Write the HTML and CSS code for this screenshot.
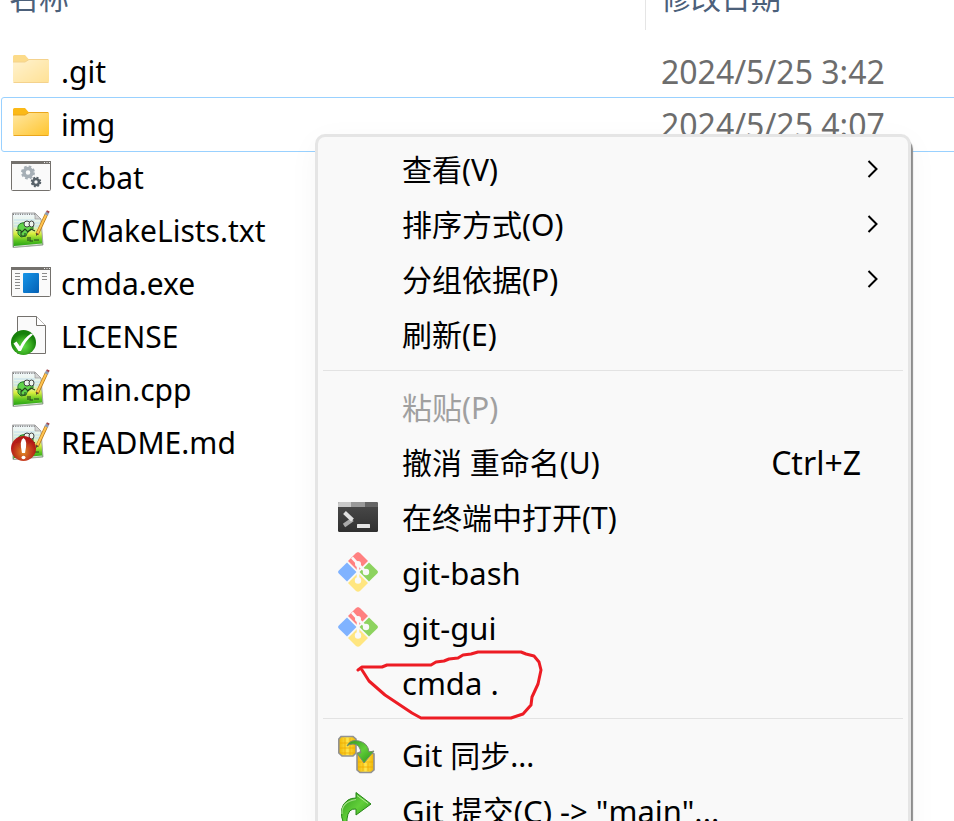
FILE: index.html
```html
<!DOCTYPE html>
<html lang="zh-CN">
<head>
<meta charset="utf-8">
<title>cmda</title>
<link rel="stylesheet" href="styles.css">
</head>
<body>
<svg class="defs" aria-hidden="true">
  <defs>
    <linearGradient id="folderFill" x1="0" y1="0" x2="1" y2="1"><stop offset="0" stop-color="#ffe7a2"/><stop offset="1" stop-color="#ffc52e"/></linearGradient>
    <linearGradient id="blueFill" x1="0" y1="0" x2="1" y2="1"><stop offset="0" stop-color="#1695e8"/><stop offset="1" stop-color="#0560b4"/></linearGradient>
    <linearGradient id="noteFill" x1="0" y1="0" x2="0" y2="1"><stop offset="0" stop-color="#f4f9ff"/><stop offset=".4" stop-color="#dff0d8"/><stop offset=".6" stop-color="#d9ee3c"/><stop offset=".8" stop-color="#5cc421"/><stop offset="1" stop-color="#189a12"/></linearGradient>
    <radialGradient id="okFill" cx=".5" cy=".65"><stop offset="0" stop-color="#62de48"/><stop offset=".6" stop-color="#38ac20"/><stop offset="1" stop-color="#16800a"/></radialGradient>
    <radialGradient id="badFill" cx=".5" cy=".65"><stop offset="0" stop-color="#e88a28"/><stop offset=".6" stop-color="#c9401c"/><stop offset="1" stop-color="#b51414"/></radialGradient>
    <linearGradient id="termFill" x1="0" y1="0" x2="0" y2="1"><stop offset="0" stop-color="#4b4b4b"/><stop offset="1" stop-color="#303030"/></linearGradient>
    <linearGradient id="goldFill" x1="0" y1="0" x2="1" y2="0"><stop offset="0" stop-color="#f0b400"/><stop offset=".5" stop-color="#ffe44a"/><stop offset="1" stop-color="#f0b400"/></linearGradient>
    <linearGradient id="greenFill" x1="0" y1="0" x2="1" y2="1"><stop offset="0" stop-color="#2f9a1c"/><stop offset=".5" stop-color="#62cf3a"/><stop offset="1" stop-color="#259012"/></linearGradient>

    <symbol id="folder" viewBox="0 0 40 40">
      <path d="M2 14V5.500Q2 4 3.500 4H14L17.500 8H36.500Q38 8 38 9.500V14Z" fill="#fbb917"/>
      <path d="M2 11H14L18 8.500H36.500Q38 8.500 38 10V30Q38 31.500 36.500 31.500H3.500Q2 31.500 2 30Z" fill="url(#folderFill)"/>
      <path d="M2 11H14L18 8.500H37M2.500 31.500H37.500" fill="none" stroke="#eaa61d"/>
    </symbol>
    <symbol id="window" viewBox="0 0 40 40">
      <rect x=".5" y="4.500" width="39" height="29" rx="1" fill="#fafafa" stroke="#74716d"/>
      <path d="M0 4h40v3H0z" fill="#74716d"/>
      <path d="M33 5.500h1M35.500 5.500h1M38 5.500h1" stroke="#eee"/>
    </symbol>
    <symbol id="bat" viewBox="0 0 40 40">
      <use href="#window"/>
      <circle cx="17" cy="15.500" r="4" fill="none" stroke="#a6afb6" stroke-width="3.500"/>
      <circle cx="17" cy="15.500" r="5.800" fill="none" stroke="#a6afb6" stroke-width="2.400" stroke-dasharray="2.600 1.950"/>
      <circle cx="25" cy="25" r="3" fill="none" stroke="#59636a" stroke-width="2.600"/>
      <circle cx="25" cy="25" r="4.300" fill="none" stroke="#59636a" stroke-width="1.900" stroke-dasharray="1.900 1.480"/>
    </symbol>
    <symbol id="exe" viewBox="0 0 40 40">
      <use href="#window"/>
      <path d="M4 10.500h5M4 13.500h5M4 16.500h5M4 19.500h5M4 22.500h5M4 25.500h5M31 10.500h5M31 13.500h5M31 16.500h5" stroke="#8a8a8a"/>
      <rect x="12" y="10" width="16" height="20" rx="1" fill="url(#blueFill)"/>
    </symbol>
    <symbol id="note" viewBox="0 0 40 40">
      <path d="M1.500 3H24L30 9 32 35 2 37.500Z" fill="url(#noteFill)" stroke="#a6a6a6"/>
      <path d="M24 3v6h6Z" fill="#d5d5d5" stroke="#999" stroke-width=".7"/>
      <path d="M2 4.200H24" stroke="#777" stroke-width="1.600" stroke-dasharray="1 1.300"/>
      <path d="M3 10H24M3 13H29M3 16H29" stroke="#b8d9ef" stroke-width=".8"/>
      <path d="M7 20Q6 14 11 13L17 12 22 15 22 19 17 21 15 26 10 27 7 24Z" fill="#62d44b" stroke="#287a26"/>
      <ellipse cx="16" cy="14" rx="3" ry="3" fill="#edf5ed" stroke="#333" stroke-width=".9"/>
      <ellipse cx="20.500" cy="14" rx="2.500" ry="3" fill="#edf5ed" stroke="#333" stroke-width=".9"/>
      <path d="M5 20.500 9 20 11 22 14 19 17 22 20 19 24 21M10 22V26H14V23M17 27V31M19 27V31H22M23 30H28" fill="none" stroke="#26431f" stroke-width="1.100"/>
      <path d="M3 36.500 31 34" stroke="#ddd"/>
      <path d="M26 24.500 35.500 4" stroke="#b67617" stroke-width="3.400"/>
      <path d="M26.300 23.500 35.500 4" stroke="#ffc451" stroke-width="2"/>
      <path d="M35.300 5 36.500 2.200" stroke="#8c9eb7" stroke-width="3.400"/>
      <path d="M36.500 2.500 37.300 .8" stroke="#a5484c" stroke-width="3"/>
      <path d="m25 26 .3-3 2 1Z" fill="#333"/>
    </symbol>
    <symbol id="license" viewBox="0 0 40 40">
      <path d="M6.500 .5H25.500L34.500 9.500V37.500H6.500Z" fill="#fafafa" stroke="#74716d"/>
      <path d="M25.500 .5V9.500H34.500" fill="#fff" stroke="#74716d"/>
      <circle cx="12.500" cy="26.500" r="12.500" fill="url(#okFill)"/>
      <path d="M2.500 27.500 5.500 25.500 9 30.500Q13 22 20 17.500L22 18.500Q14 25 10 35H7.500Z" fill="#fff"/>
    </symbol>
    <symbol id="readme" viewBox="0 0 40 40">
      <use href="#note"/>
      <circle cx="12.500" cy="26.500" r="12.500" fill="url(#badFill)" fill-opacity=".96"/>
      <path d="M12.500 16Q17 18 14 31H11Q8 18 12.500 16Z" fill="#fff"/>
      <ellipse cx="12.500" cy="35.500" rx="2" ry="1.800" fill="#fff"/>
    </symbol>
    <symbol id="terminal" viewBox="0 0 40 40">
      <rect y="5" width="40" height="30" rx="1.500" fill="url(#termFill)"/>
      <path d="M1.500 5H13v5H0V6.500Q0 5 1.500 5Z" fill="#c9c9c9"/><path d="M13 5h14v5H13z" fill="#999"/><path d="M27 5h11.500Q40 5 40 6.500V10H27Z" fill="#666"/>
      <path d="m6 28.500 8.500-6" stroke="#aaa" stroke-width="4"/><path d="m6.500 15.500 8 7.500" stroke="#e0e0e0" stroke-width="4"/>
      <rect x="19" y="27" width="13" height="4" rx=".5" fill="#e5e5e5"/>
    </symbol>
    <symbol id="git" viewBox="0 0 40 40">
      <path d="m20 0 2 1 8 8-10 10L10 9l8-8Z" fill="#ff8080"/>
      <path d="m9 10.500 9.500 9.500L9 29.500.8 21.500Q-.7 20 .8 18.500Z" fill="#80b3ff"/>
      <path d="m31 10.500 8.200 8Q40.700 20 39.200 21.500L31 29.500 21.500 20Z" fill="#8dd35f"/>
      <path d="m20 21 10 10-8 8q-2 1.500-4 0l-8-8Z" fill="#ffe680"/>
      <path d="M14 5.500 20 12V29M20 12l8 8" fill="none" stroke="#f9f9f9" stroke-width="2.600"/>
      <circle cx="20" cy="12" r="3" fill="#f9f9f9"/><circle cx="28" cy="20" r="3.200" fill="#f9f9f9"/><circle cx="20" cy="28.500" r="3.200" fill="#f9f9f9"/>
    </symbol>
    <symbol id="sync" viewBox="0 0 40 40">
      <path d="M3 1.500H15L18 4V18L15 21H4L.8 18V4Z" fill="url(#goldFill)" stroke="#929292" stroke-width="1.600"/>
      <path d="M22 17H33L36 19V35L33 37.500H22L19 35V19Z" fill="url(#goldFill)" stroke="#929292" stroke-width="1.600"/>
      <path d="M2 8H17M2 13H17M2 18H17M20 27H35M20 32H35M7 3V20M12 3V20M25 28V36M30 28V36" stroke="#efaa00" stroke-width=".8"/>
      <path d="M9 11Q12 4 21 6Q30 8 31 17L36 16 26 28 19 18 23 18Q22 9 15 9Q11 9 9 11Z" fill="url(#greenFill)" stroke="#788c70"/>
    </symbol>
    <symbol id="commit" viewBox="0 0 40 40">
      <path d="M18 2.500 33 14 18 25V19Q10 18 9 29V35H6Q-1 17 10 10Q13 8 18 8Z" fill="url(#greenFill)" stroke="#278619"/>
      <path d="M19 5.500 30 13.500" stroke="#b0e792" stroke-width="1"/>
      <path d="M4 24Q3 12 18 9.500" fill="none" stroke="#a6e08a" stroke-width="1.200"/>
    </symbol>
    <symbol id="chevron" viewBox="0 0 12 20"><path d="m1.500 2 8 8-8 8" fill="none" stroke="#000" stroke-width="2"/></symbol>
  </defs>
</svg>

<main class="explorer">
  <table class="files">
    <thead><tr><th class="name-col" scope="col">名称</th><th scope="col">修改日期</th></tr></thead>
    <tbody>
      <tr><td><span class="file"><svg class="icon faded"><use href="#folder"/></svg>.git</span></td><td>2024/5/25 3:42</td></tr>
      <tr class="focused"><td><span class="file"><svg class="icon"><use href="#folder"/></svg>img</span></td><td>2024/5/25 4:07</td></tr>
      <tr><td><span class="file"><svg class="icon"><use href="#bat"/></svg>cc.bat</span></td><td></td></tr>
      <tr><td><span class="file"><svg class="icon"><use href="#note"/></svg>CMakeLists.txt</span></td><td></td></tr>
      <tr><td><span class="file"><svg class="icon"><use href="#exe"/></svg>cmda.exe</span></td><td></td></tr>
      <tr><td><span class="file"><svg class="icon"><use href="#license"/></svg>LICENSE</span></td><td></td></tr>
      <tr><td><span class="file"><svg class="icon"><use href="#note"/></svg>main.cpp</span></td><td></td></tr>
      <tr><td><span class="file"><svg class="icon"><use href="#readme"/></svg>README.md</span></td><td></td></tr>
    </tbody>
  </table>

  <div class="menu" role="menu">
    <button class="item" role="menuitem"><span class="icon"></span><span class="label">查看(V)</span><svg class="chevron"><use href="#chevron"/></svg></button>
    <button class="item" role="menuitem"><span class="icon"></span><span class="label">排序方式(O)</span><svg class="chevron"><use href="#chevron"/></svg></button>
    <button class="item" role="menuitem"><span class="icon"></span><span class="label">分组依据(P)</span><svg class="chevron"><use href="#chevron"/></svg></button>
    <button class="item" role="menuitem"><span class="icon"></span><span class="label">刷新(E)</span></button>
    <hr>
    <button class="item" role="menuitem" disabled><span class="icon"></span><span class="label">粘贴(P)</span></button>
    <button class="item" role="menuitem"><span class="icon"></span><span class="label">撤消 重命名(U)</span><span class="shortcut">Ctrl+Z</span></button>
    <button class="item" role="menuitem"><svg class="icon"><use href="#terminal"/></svg><span class="label">在终端中打开(T)</span></button>
    <button class="item command" role="menuitem"><svg class="icon"><use href="#git"/></svg><span class="label">git-bash</span></button>
    <button class="item command" role="menuitem"><svg class="icon"><use href="#git"/></svg><span class="label">git-gui</span></button>
    <button class="item command" role="menuitem"><span class="icon"></span><span class="label">cmda .</span>
      <svg class="marker" viewBox="0 0 190 72"><path d="M2 18 6 15H26L31 13H75L80 10 88 9 93 7 102 6 107 3 115 2 122 0H165L170 2 178 4 183 10 185 18 182 32 176 45 175 53 167 62 155 66H65L56 61 29 43 13 29 6 18" fill="none" stroke="#ed1c24" stroke-width="3" stroke-linejoin="round" stroke-linecap="round"/></svg>
    </button>
    <hr>
    <button class="item" role="menuitem"><svg class="icon"><use href="#sync"/></svg><span class="label">Git 同步...</span></button>
    <button class="item command" role="menuitem"><svg class="icon"><use href="#commit"/></svg><span class="label">Git 提交(C) -&gt; "main"...</span></button>
  </div>
</main>
</body>
</html>
```

FILE: styles.css
```css
* { box-sizing: border-box; }

body {
  margin: 0;
  background: #fff;
  color: #000;
  font: 30px/40px "Noto Sans", "Noto Sans CJK SC", sans-serif;
}

.defs { position: absolute; width: 0; height: 0; }

.explorer {
  position: relative;
  height: 100vh;
  overflow: hidden;
}

.files {
  width: 110%;
  margin: -30px 0 0 2px;
  border-collapse: separate;
  border-spacing: 0;
  table-layout: fixed;
}

th {
  height: 60px;
  padding: 0 15px 4px;
  color: #4c607a;
  font-weight: 400;
  text-align: left;
}

.name-col {
  width: 644px;
  padding-left: 7px;
  border-right: 1px solid #e5e5e5;
}

tbody::before { content: ""; display: block; height: 15px; }

td {
  height: 53px;
  padding: 0 15px;
  color: #6d6d6d;
  font-size: 32px;
}

td:first-child { padding: 0 9px; color: #000; font-size: 30px; }

.focused { outline: 1px solid #99d1ff; border-radius: 2px; }

.file { display: flex; align-items: center; gap: 10px; }

.icon { flex: none; width: 40px; height: 40px; }
.file .icon { margin-bottom: 2px; }
.faded { opacity: .5; }

.menu {
  position: absolute;
  top: 134px;
  left: 315px;
  width: 596px;
  padding: 4px 5px;
  border: 3px solid #e5e5e5;
  border-radius: 10px;
  background: #f9f9f9;
  box-shadow: 2px 5px 1px #8c8c8c, 0 8px 32px rgb(0 0 0 / 4%);
}

.item {
  position: relative;
  display: flex;
  align-items: center;
  width: 100%;
  height: 55px;
  padding: 0 24px 0 15px;
  border: 0;
  background: none;
  color: #000;
  font: inherit;
  text-align: left;
}

.item:disabled { color: #a0a0a0; }
.command { font-size: 31px; }
.label { flex: 1; padding: 2px 0 0 24px; }
.shortcut { padding: 2px 18px 0 0; font-size: 32px; }
.chevron { width: 12px; height: 20px; }

.menu hr {
  height: 1px;
  margin: 9px 0 8px;
  border: 0;
  background: #e3e3e3;
}

.marker {
  position: absolute;
  top: -2px;
  left: 33px;
  width: 190px;
  height: 72px;
  overflow: visible;
}
```
